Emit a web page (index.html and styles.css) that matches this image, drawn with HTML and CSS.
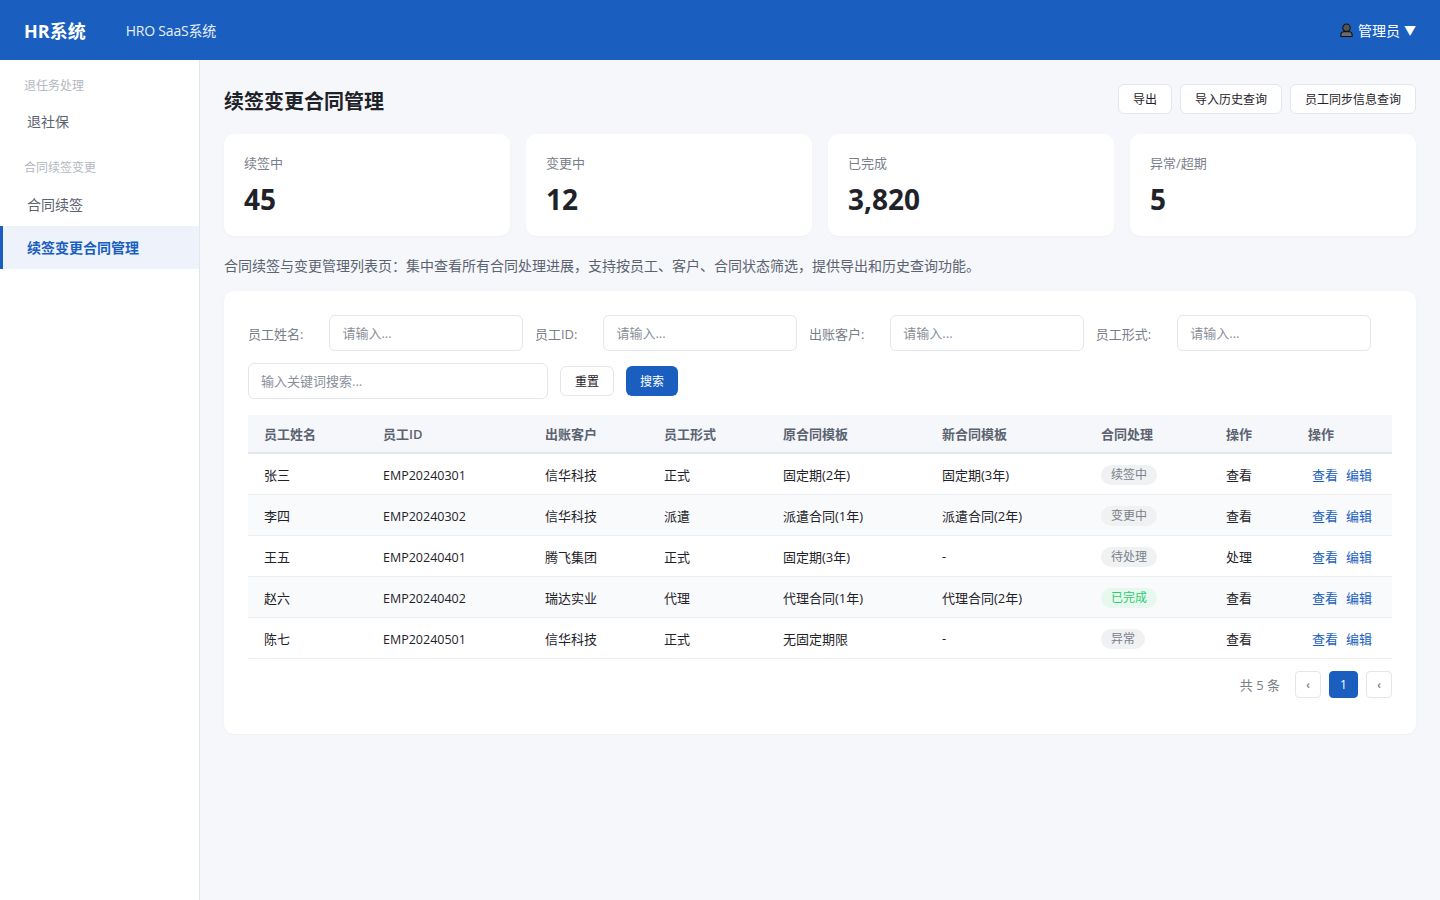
FILE: index.html
```html
<!DOCTYPE html>
<html lang="zh-CN">
<head>
    <meta charset="UTF-8">
    <meta name="viewport" content="width=device-width, initial-scale=1.0">
    <title>续签变更合同管理</title>
    <link rel="stylesheet" href="styles.css">
</head>
<body>
    <header class="topbar">
        <div class="logo">HR系统</div>
        <div class="system-name">HRO SaaS系统</div>
        <div class="user-menu">
            <svg class="user-icon" viewBox="0 0 14 16" width="13" height="16">
                <path d="M1 15v-2.500c0-1.500 1.500-2.300 3.500-2.800h5c2 .5 3.500 1.300 3.500 2.800V15z" fill="#6b6b6b" stroke="#111" stroke-width="1.200"/>
                <circle cx="7" cy="5.500" r="4" fill="#555" stroke="#111" stroke-width="1.200"/>
            </svg>
            <span>管理员</span>
            <span class="caret">▼</span>
        </div>
    </header>
    <div class="layout">
        <aside class="sidebar">
            <div class="nav-title">退任务处理</div>
            <a class="nav-item">退社保</a>
            <div class="nav-title">合同续签变更</div>
            <a class="nav-item">合同续签</a>
            <a class="nav-item active">续签变更合同管理</a>
        </aside>
        <main class="content">
            <div class="page-head">
                <h1>续签变更合同管理</h1>
                <div class="head-actions">
                    <button class="btn">导出</button>
                    <button class="btn">导入历史查询</button>
                    <button class="btn">员工同步信息查询</button>
                </div>
            </div>
            <div class="stats">
                <div class="stat-card">
                    <div class="stat-label">续签中</div>
                    <div class="stat-value">45</div>
                </div>
                <div class="stat-card">
                    <div class="stat-label">变更中</div>
                    <div class="stat-value">12</div>
                </div>
                <div class="stat-card">
                    <div class="stat-label">已完成</div>
                    <div class="stat-value">3,820</div>
                </div>
                <div class="stat-card">
                    <div class="stat-label">异常/超期</div>
                    <div class="stat-value">5</div>
                </div>
            </div>
            <p class="desc">合同续签与变更管理列表页：集中查看所有合同处理进展，支持按员工、客户、合同状态筛选，提供导出和历史查询功能。</p>
            <section class="panel">
                <div class="filters">
                    <label class="filter-label">员工姓名:</label>
                    <input class="input" placeholder="请输入...">
                    <label class="filter-label">员工ID:</label>
                    <input class="input" placeholder="请输入...">
                    <label class="filter-label">出账客户:</label>
                    <input class="input" placeholder="请输入...">
                    <label class="filter-label">员工形式:</label>
                    <input class="input" placeholder="请输入...">
                </div>
                <div class="search-row">
                    <input class="input keyword" placeholder="输入关键词搜索...">
                    <button class="btn">重置</button>
                    <button class="btn primary">搜索</button>
                </div>
                <table class="data-table">
                    <colgroup>
                        <col class="c-name">
                        <col class="c-id">
                        <col class="c-client">
                        <col class="c-type">
                        <col class="c-tpl">
                        <col class="c-tpl">
                        <col class="c-status">
                        <col class="c-op">
                        <col class="c-actions">
                    </colgroup>
                    <thead>
                        <tr>
                            <th>员工姓名</th>
                            <th>员工ID</th>
                            <th>出账客户</th>
                            <th>员工形式</th>
                            <th>原合同模板</th>
                            <th>新合同模板</th>
                            <th>合同处理</th>
                            <th>操作</th>
                            <th>操作</th>
                        </tr>
                    </thead>
                    <tbody>
                        <tr>
                            <td>张三</td>
                            <td class="emp-id">EMP20240301</td>
                            <td>信华科技</td>
                            <td>正式</td>
                            <td>固定期(2年)</td>
                            <td>固定期(3年)</td>
                            <td><span class="tag">续签中</span></td>
                            <td>查看</td>
                            <td class="actions"><a class="link">查看</a><a class="link">编辑</a></td>
                        </tr>
                        <tr>
                            <td>李四</td>
                            <td class="emp-id">EMP20240302</td>
                            <td>信华科技</td>
                            <td>派遣</td>
                            <td>派遣合同(1年)</td>
                            <td>派遣合同(2年)</td>
                            <td><span class="tag">变更中</span></td>
                            <td>查看</td>
                            <td class="actions"><a class="link">查看</a><a class="link">编辑</a></td>
                        </tr>
                        <tr>
                            <td>王五</td>
                            <td class="emp-id">EMP20240401</td>
                            <td>腾飞集团</td>
                            <td>正式</td>
                            <td>固定期(3年)</td>
                            <td>-</td>
                            <td><span class="tag">待处理</span></td>
                            <td>处理</td>
                            <td class="actions"><a class="link">查看</a><a class="link">编辑</a></td>
                        </tr>
                        <tr>
                            <td>赵六</td>
                            <td class="emp-id">EMP20240402</td>
                            <td>瑞达实业</td>
                            <td>代理</td>
                            <td>代理合同(1年)</td>
                            <td>代理合同(2年)</td>
                            <td><span class="tag done">已完成</span></td>
                            <td>查看</td>
                            <td class="actions"><a class="link">查看</a><a class="link">编辑</a></td>
                        </tr>
                        <tr>
                            <td>陈七</td>
                            <td class="emp-id">EMP20240501</td>
                            <td>信华科技</td>
                            <td>正式</td>
                            <td>无固定期限</td>
                            <td>-</td>
                            <td><span class="tag">异常</span></td>
                            <td>查看</td>
                            <td class="actions"><a class="link">查看</a><a class="link">编辑</a></td>
                        </tr>
                    </tbody>
                </table>
                <div class="pagination">
                    <span class="total">共 5 条</span>
                    <button class="page-btn">‹</button>
                    <button class="page-btn current">1</button>
                    <button class="page-btn">‹</button>
                </div>
            </section>
        </main>
    </div>
</body>
</html>
```

FILE: styles.css
```css
* {
    margin: 0;
    padding: 0;
    box-sizing: border-box;
    font-family: "Open Sans", "Noto Sans CJK SC", sans-serif;
}

body {
    background: #f5f7fb;
    color: #1f2329;
    font-size: 13px;
}

.topbar {
    display: flex;
    align-items: center;
    height: 60px;
    padding: 0 24px;
    background: #1a5fbf;
    color: #ffffff;
}

.logo {
    font-size: 18px;
    font-weight: 700;
    margin-right: 40px;
}

.system-name {
    font-size: 14px;
    letter-spacing: -0.2px;
    opacity: 0.9;
}

.user-menu {
    display: flex;
    align-items: center;
    gap: 5px;
    margin-left: auto;
    font-size: 14px;
}

.caret {
    margin-left: -1px;
    font-size: 12px;
}

.layout {
    display: flex;
    min-height: 840px;
}

.sidebar {
    width: 200px;
    flex-shrink: 0;
    padding-top: 17px;
    background: #ffffff;
    border-right: 1px solid #e3e6ec;
}

.nav-title {
    padding: 0 24px;
    height: 18px;
    line-height: 18px;
    font-size: 12px;
    color: #b4b8bf;
}

.nav-item {
    display: block;
    height: 43px;
    line-height: 43px;
    padding-left: 27px;
    font-size: 14px;
    color: #5c6370;
}

.nav-item + .nav-title {
    margin-top: 16px;
}

.nav-title + .nav-item {
    margin-top: 6px;
}

.nav-title:first-child + .nav-item {
    margin-top: 5px;
}

.nav-item.active {
    padding-left: 24px;
    border-left: 3px solid #1a5fbf;
    background: #edf2fb;
    color: #1a5fbf;
    font-weight: 700;
}

.content {
    flex: 1;
    padding: 24px;
}

.page-head {
    display: flex;
    justify-content: space-between;
    align-items: center;
    height: 30px;
    margin-bottom: 20px;
}

.page-head h1 {
    padding-top: 2px;
    font-size: 20px;
    font-weight: 700;
    color: #1f2329;
}

.head-actions {
    display: flex;
    gap: 8px;
}

.btn {
    height: 30px;
    padding: 0 14px;
    border: 1px solid #e3e6ec;
    border-radius: 6px;
    background: #ffffff;
    color: #1f2329;
    font-size: 12px;
}

.btn.primary {
    border: none;
    background: #1a5fbf;
    color: #ffffff;
}

.stats {
    display: grid;
    grid-template-columns: repeat(4, 1fr);
    gap: 16px;
    margin-bottom: 20px;
}

.stat-card {
    height: 102px;
    padding: 20px;
    background: #ffffff;
    border-radius: 10px;
    box-shadow: 0 1px 3px rgba(0, 0, 0, 0.03);
}

.stat-label {
    height: 18px;
    line-height: 18px;
    font-size: 13px;
    color: #7a808a;
}

.stat-value {
    margin-top: 8px;
    line-height: 38px;
    font-size: 28px;
    font-weight: 700;
    color: #1f2329;
}

.desc {
    height: 20px;
    line-height: 20px;
    margin-bottom: 15px;
    font-size: 14px;
    color: #5c6370;
}

.panel {
    padding: 24px 24px 36px;
    background: #ffffff;
    border-radius: 10px;
    box-shadow: 0 1px 3px rgba(0, 0, 0, 0.03);
}

.filters {
    display: flex;
    align-items: center;
    margin-bottom: 12px;
}

.filter-label {
    margin-right: 26px;
    font-size: 13px;
    color: #7a808a;
}

.input {
    width: 194px;
    height: 36px;
    padding: 0 12px;
    margin-right: 11.5px;
    border: 1px solid #e3e6ec;
    border-radius: 6px;
    background: #ffffff;
    font-size: 13px;
    color: #1f2329;
    outline: none;
}

.input::placeholder {
    color: #8a8f98;
}

.search-row {
    display: flex;
    align-items: center;
    gap: 12px;
    margin-bottom: 16px;
}

.input.keyword {
    width: 300px;
    margin-right: 0;
}

.data-table {
    width: 100%;
    border-collapse: collapse;
    table-layout: fixed;
}

.c-name, .c-type { width: 119px; }
.c-id { width: 162px; }
.c-client { width: 119px; }
.c-tpl { width: 159px; }
.c-status { width: 125px; }
.c-op { width: 82px; }
.c-actions { width: 100px; }

.data-table th {
    height: 38px;
    padding: 0 16px;
    text-align: left;
    font-size: 13px;
    font-weight: 600;
    color: #5c6370;
    background: #f5f7fb;
    border-bottom: 2px solid #e3e6ec;
}

.data-table td {
    height: 41px;
    padding: 1px 16px 0;
    font-size: 13px;
    color: #1f2329;
    border-bottom: 1px solid #eceef2;
}

.data-table td.emp-id {
    padding-top: 3px;
    font-size: 12.5px;
}

.data-table td.actions {
    padding-right: 0;
    white-space: nowrap;
}

.data-table tbody tr:nth-child(even) td {
    background: #f9fafc;
}

.tag {
    display: inline-block;
    height: 20px;
    line-height: 20px;
    margin-top: 2px;
    padding: 0 10px;
    border-radius: 10px;
    background: #f0f1f3;
    color: #7a808a;
    font-size: 12px;
}

.tag.done {
    background: #e7f9ef;
    color: #2ecc71;
}

.link {
    margin-left: 4px;
    margin-right: 4px;
    color: #1a5fbf;
}

.pagination {
    display: flex;
    justify-content: flex-end;
    align-items: center;
    gap: 8px;
    margin-top: 12px;
}

.total {
    margin-right: 7px;
    color: #7a808a;
    font-size: 13px;
}

.page-btn {
    width: 26px;
    height: 27px;
    border: 1px solid #e3e6ec;
    border-radius: 4px;
    background: #ffffff;
    color: #5c6370;
    font-size: 12px;
}

.page-btn.current {
    width: 29px;
    background: #1a5fbf;
    border-color: #1a5fbf;
    color: #ffffff;
}
```
